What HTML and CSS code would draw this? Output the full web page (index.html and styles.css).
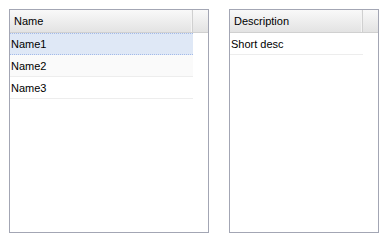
FILE: index.html
```html
<!DOCTYPE html>
<html lang="en">
<head>
    <meta charset="UTF-8">
    <title>Grids</title>
    <link rel="stylesheet" href="styles.css">
</head>
<body>
    <!-- Names grid -->
    <div class="grid grid-names">
        <div class="grid-head">
            <div class="head-cell">Name</div>
            <div class="head-filler"></div>
        </div>
        <div class="grid-body">
            <div class="row selected">Name1</div>
            <div class="row alt">Name2</div>
            <div class="row">Name3</div>
        </div>
    </div>

    <!-- Descriptions grid -->
    <div class="grid grid-desc">
        <div class="grid-head">
            <div class="head-cell">Description</div>
            <div class="head-filler"></div>
        </div>
        <div class="grid-body">
            <div class="row">Short desc</div>
        </div>
    </div>
</body>
</html>
```

FILE: styles.css
```css
* {
    margin: 0;
    padding: 0;
    box-sizing: border-box;
}

body {
    background: #ffffff;
    font-family: 'Liberation Sans', Arial, sans-serif;
    font-size: 11px;
    color: #000000;
    display: flex;
    gap: 20px;
    padding: 9px;
}

.grid {
    height: 224px;
    border: 1px solid #a3a6b4;
    background: #ffffff;
}

.grid-names { width: 200px; }
.grid-desc { width: 150px; }

/* Header */
.grid-head {
    display: flex;
    height: 23px;
    background: linear-gradient(#f9f9f9, #e3e3e3);
    border-bottom: 1px solid #d0d0d0;
}

.head-cell {
    flex: 1;
    padding: 5px 4px 0;
    border-right: 1px solid #d0d0d0;
    box-shadow: inset -1px 0 0 #f4f4f4;
}

.head-filler {
    width: 15px;
}

/* Rows */
.grid-body {
    margin-right: 15px;
}

.row {
    height: 22px;
    padding: 4px 1px 0;
    border-top: 1px solid #ffffff;
    border-bottom: 1px solid #ededed;
}

.row.alt {
    background: #fafafa;
    border-top-color: #fafafa;
}

.row.selected {
    background: #dfe8f6;
    border-top: 1px dotted #a3bae9;
    border-bottom: 1px dotted #a3bae9;
}
```
